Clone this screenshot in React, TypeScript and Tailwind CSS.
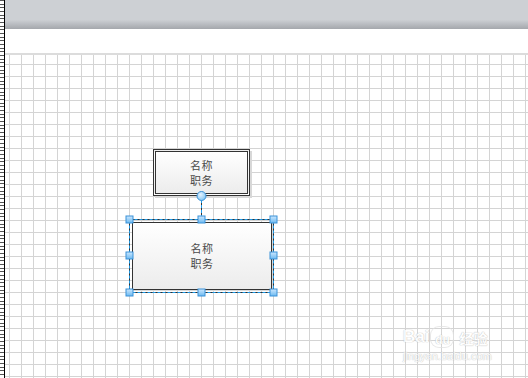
export default function App() {
  const handles: [number, number][] = [
    [129.5, 219.5],
    [201.5, 219.5],
    [273.5, 219.5],
    [129.5, 255.5],
    [273.5, 255.5],
    [129.5, 292.5],
    [201.5, 292.5],
    [273.5, 292.5],
  ];
  return (
    <div className="relative flex h-[378px] w-[528px] overflow-hidden bg-white font-['Noto_Sans_CJK_SC',sans-serif]">
      {/* left ruler */}
      <div className="h-full w-[5px] shrink-0 border-r border-black bg-[linear-gradient(to_bottom,#555_0,#555_1px,#fff_1px,#fff_4px,#555_4px,#555_5px,#fff_5px,#fff_7px,#555_7px,#555_8px,#fff_8px)] [background-size:4px_11px]" />
      {/* main */}
      <div className="flex min-w-0 flex-1 flex-col">
        <div className="h-[29px] shrink-0 bg-[linear-gradient(to_bottom,#cdd0d4_0%,#cdd0d4_68%,#a4a7ac_100%)]" />
        <div className="h-[24px] shrink-0 bg-white" />
        <div className="flex-1 border-t-2 border-[#dcdcdc] bg-white bg-[linear-gradient(to_right,#d4d4d4_1px,transparent_1px),linear-gradient(to_bottom,#d4d4d4_1px,transparent_1px)] [background-size:12px_12px] [background-position:4px_9px]" />
      </div>

      {/* top node */}
      <div className="absolute left-[153px] top-[149px] flex h-[47px] w-[97px] flex-col items-center justify-center gap-[2px] border-[3px] border-double border-[#333] bg-[linear-gradient(to_bottom,#ffffff,#ececec)] text-[11px] leading-[13px] tracking-[0.5px] text-[#4a4a4a] shadow-[2px_2px_0_#d8d8d8]">
        <span>名称</span>
        <span>职务</span>
      </div>

      {/* selected node */}
      <div className="absolute left-[132px] top-[222px] flex h-[68px] w-[140px] flex-col items-center justify-center gap-[2px] border border-[#333] bg-[linear-gradient(to_bottom,#ffffff,#ececec)] text-[11px] leading-[13px] tracking-[0.5px] text-[#4a4a4a] shadow-[1px_1px_0_#d8d8d8]">
        <span>名称</span>
        <span>职务</span>
      </div>

      {/* selection overlay */}
      <svg className="pointer-events-none absolute left-0 top-0" width="528" height="378" viewBox="0 0 528 378">
        <defs>
          <linearGradient id="hg" x1="0" y1="0" x2="0" y2="1">
            <stop offset="0" stopColor="#cde8ff" />
            <stop offset="1" stopColor="#6cb9f0" />
          </linearGradient>
          <radialGradient id="cg" cx="0.4" cy="0.35" r="0.7">
            <stop offset="0" stopColor="#e4f3ff" />
            <stop offset="1" stopColor="#7cc2f2" />
          </radialGradient>
        </defs>
        <line x1="201.5" y1="200" x2="201.5" y2="216" stroke="#333" strokeWidth="1" />
        <line x1="201.5" y1="200" x2="201.5" y2="216" stroke="#1e9be9" strokeWidth="1" strokeDasharray="3 2" />
        <rect x="129.5" y="219.5" width="144" height="73" fill="none" stroke="#333" strokeWidth="1" />
        <rect x="129.5" y="219.5" width="144" height="73" fill="none" stroke="#1e9be9" strokeWidth="1" strokeDasharray="3 2" />
        <circle cx="201.5" cy="196" r="4.5" fill="url(#cg)" stroke="#3a92d8" strokeWidth="1" />
        {handles.map(([cx, cy], i) => (
          <rect key={i} x={cx - 3.5} y={cy - 3.5} width="7" height="7" fill="url(#hg)" stroke="#3a92d8" strokeWidth="1" />
        ))}
      </svg>

      {/* watermark */}
      <div className="pointer-events-none absolute left-[403px] top-[327px] flex flex-col items-start text-white opacity-80 [text-shadow:0_0_1px_#b8b8b8,0_0_1px_#b8b8b8]">
        <div className="flex items-end gap-[2px] font-['Liberation_Sans',sans-serif] text-[17px] font-bold leading-[20px]">
          <span>Bai</span>
          <span className="flex h-[20px] w-[22px] items-end justify-center rounded-[8px] text-[12px] leading-[14px] [box-shadow:0_0_0_1px_#e2e2e2]">du</span>
          <span className="ml-[4px] font-['Noto_Sans_CJK_SC',sans-serif] text-[14px] leading-[18px]">经验</span>
        </div>
        <span className="mt-[3px] font-['Liberation_Sans',sans-serif] text-[11px] leading-[12px]">jingyan.baidu.com</span>
      </div>
    </div>
  );
}
